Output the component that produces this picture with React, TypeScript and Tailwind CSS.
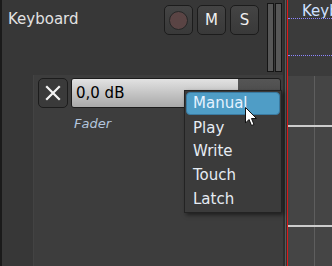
import React from "react";

const font = { fontFamily: '"DejaVu Sans", "Liberation Sans", sans-serif' };

function Btn({ children }: { children: React.ReactNode }) {
  return (
    <div className="shrink-0 w-[29px] h-[30px] rounded-[5px] border border-[#1c1c1c] bg-gradient-to-b from-[#444444] to-[#393939] flex items-center justify-center text-[15px] text-[#f0f0f0]">
      {children}
    </div>
  );
}

export default function App() {
  const items = ["Manual", "Play", "Write", "Touch", "Latch"];
  return (
    <div className="relative w-[332px] h-[266px] overflow-hidden flex bg-[#373737]" style={font}>
      <div className="shrink-0 w-[2px] h-full bg-[#1a1a1a]" />
      <div className="shrink-0 w-[281px] h-full flex flex-col bg-[#373737]">
        <div className="h-[75px] flex items-start">
          <div className="flex-1 pl-[6px] pt-[8px] text-[15px] text-[#e2e2e2] leading-[22px]">Keyboard</div>
          <div className="shrink-0 flex gap-[4px] mt-[5px]">
            <Btn>
              <div className="w-[19px] h-[19px] rounded-full bg-[#5a4444] border border-[#262626]" />
            </Btn>
            <Btn>M</Btn>
            <Btn>S</Btn>
          </div>
          <div className="shrink-0 flex gap-[1px] mt-[3px] ml-[8px] mr-[1px]">
            <div className="w-[7px] h-[69px] bg-[#575757] border border-[#151515]" />
            <div className="w-[7px] h-[69px] bg-[#575757] border border-[#151515]" />
          </div>
        </div>
        <div className="flex-1 ml-[31px] bg-[#3d3d3d] border-l border-[#434343] pl-[4px] pt-[3px] pr-[2px]">
          <div className="flex gap-[3px] items-center">
            <div className="shrink-0 w-[30px] h-[30px] rounded-[5px] border border-[#1c1c1c] bg-[#3a3a3a] flex items-center justify-center">
              <svg width="16" height="16" viewBox="0 0 16 16">
                <path d="M2 2 L14 14 M14 2 L2 14" stroke="#f4f4f4" strokeWidth="2.2" strokeLinecap="square" />
              </svg>
            </div>
            <div className="flex-1 h-[30px] rounded-[3px] border border-[#1c1c1c] flex overflow-hidden bg-gradient-to-b from-[#555555] to-[#464646]">
              <div className="w-[166px] h-full bg-gradient-to-b from-[#e2e2e2] to-[#a9a9a9] flex items-center pl-[4px] text-[15px] text-black">
                0,0 dB
              </div>
            </div>
          </div>
          <div className="pl-[36px] pt-[8px] text-[13px] italic text-[#b4c6de] leading-[16px]">Fader</div>
        </div>
      </div>
      <div className="shrink-0 w-[2px] h-full bg-[#2e2e2e]" />
      <div className="shrink-0 w-[1px] h-full bg-[#5a5a5a]" />
      <div className="shrink-0 w-[1px] h-full bg-[#333333]" />
      <div className="shrink-0 w-[1px] h-full bg-[#e01818]" />
      <div className="flex-1 min-w-0 h-full flex flex-col">
        <div className="h-[76px] bg-[#3b3b3b] flex flex-col">
          <div className="h-[18px] pl-[14px] pt-[2px] text-[15px] leading-[18px] text-[#cfe0ff] whitespace-nowrap overflow-hidden">Keyboard</div>
          <div className="h-[1px] border-t border-dotted border-[#8c86ff]" />
          <div className="h-[36px]" />
          <div className="h-[1px] border-t border-dotted border-[#8c86ff]" />
        </div>
        <div className="flex-1 bg-[#454545] relative">
          <div className="absolute left-[26px] top-0 bottom-0 w-[1px] bg-[#5e5e5e]" />
          <div className="absolute left-0 right-0 top-[49px] h-[2px] bg-[#cccccc]" />
          <div className="absolute left-0 right-0 top-[149px] h-[2px] bg-[#cccccc]" />
        </div>
      </div>

      <div className="absolute left-[184px] top-[90px] w-[98px] h-[123px] bg-[#3b3b3b] border border-[#232323] shadow-[2px_2px_4px_rgba(0,0,0,0.5)] p-[1px] flex flex-col">
        {items.map((it, i) => (
          <div
            key={it}
            className={
              i === 0
                ? "h-[23px] mb-[1px] rounded-[4px] bg-[#4f9dc6] border border-[#3a7aa0] pl-[6px] flex items-center text-[15px] text-[#e6f2ff]"
                : "h-[24.5px] pl-[7px] flex items-center text-[15px] text-[#e6ecf4]"
            }
          >
            {it}
          </div>
        ))}
      </div>

      <svg className="absolute left-[245px] top-[107px]" width="14" height="22" viewBox="0 0 14 22">
        <path d="M0.5 0.5 L0.5 16 L4 12.5 L6.5 18.5 L9 17.5 L6.5 11.5 L11.5 11.5 Z" fill="#ffffff" stroke="#111111" strokeWidth="1" strokeLinejoin="round" />
      </svg>
    </div>
  );
}
